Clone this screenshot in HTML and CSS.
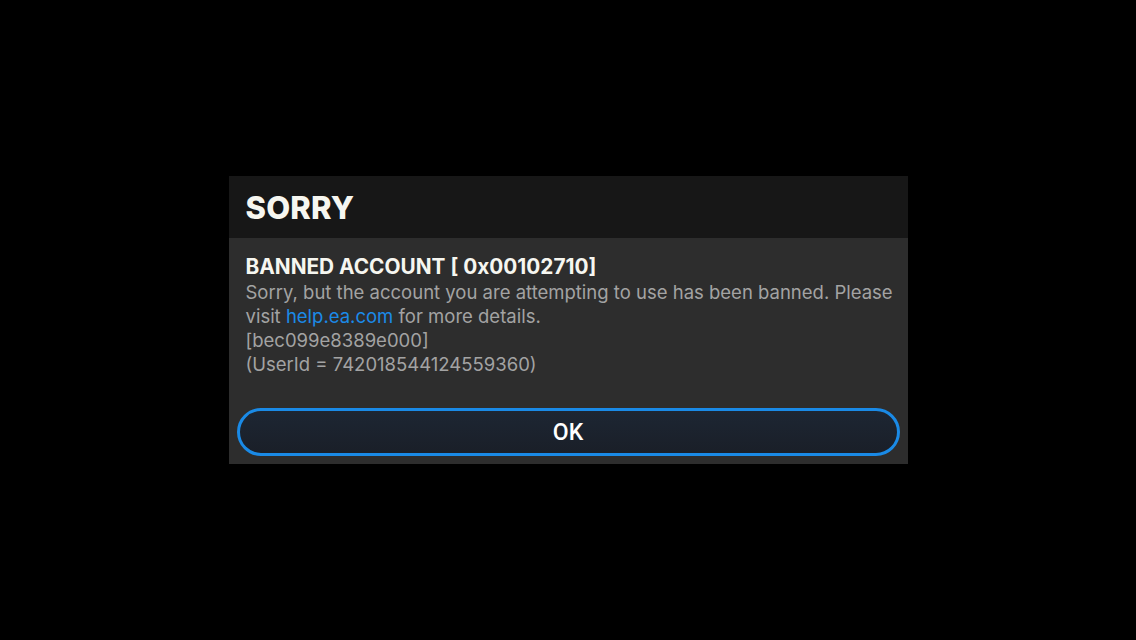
FILE: index.html
```html
<!DOCTYPE html>
<html>
<head>
<meta charset="utf-8">
<link rel="stylesheet" href="styles.css">
</head>
<body>
<div class="screen">
  <div class="dialog">
    <div class="header"><h1 class="title">SORRY</h1></div>
    <div class="body">
      <div class="msg-title">BANNED ACCOUNT [ 0x00102710]</div>
      <div class="msg">Sorry, but the account you are attempting to use has been banned. Please visit <span class="link">help.ea.com</span> for more details.<br>[bec099e8389e000]<br>(UserId = 742018544124559360)</div>
    </div>
    <div class="actions">
      <button class="ok">OK</button>
    </div>
  </div>
</div>
</body>
</html>
```
FILE: styles.css
```css
html, body { margin: 0; padding: 0; background: #000; }
.screen {
  width: 1136px; height: 640px;
  display: flex; align-items: flex-start; justify-content: center;
  font-family: Inter, "Noto Sans", sans-serif;
}
.dialog {
  margin-top: 176px;
  width: 679px;
  background: #2d2d2d;
  display: flex; flex-direction: column;
}
.header {
  background: #171717;
  height: 62px;
  display: flex; align-items: center;
  padding-left: 17px;
}
.title {
  margin: 0;
  color: #f6f6f0;
  font-size: 31px;
  font-weight: 800;
  letter-spacing: 0.2px;
}
.body {
  padding: 16px 6px 0 17px;
}
.msg-title {
  color: #f6f6f0;
  font-size: 20.8px;
  font-weight: 700;
  line-height: 26px;
}
.msg {
  color: #a3a3a3;
  font-size: 18.5px;
  line-height: 24px;
}
.link { color: #1b8ae8; }
.actions {
  padding: 32px 8px 8px 8px;
}
.ok {
  width: 100%;
  height: 48px;
  border: 3px solid #1a8ae6;
  border-radius: 24px;
  background: linear-gradient(#1d2633, #1a1f28);
  color: #fff;
  font-family: Roboto, "Liberation Sans", Arial, sans-serif;
  font-size: 23px;
  font-weight: 500;
  display: flex; align-items: center; justify-content: center;
}
```
